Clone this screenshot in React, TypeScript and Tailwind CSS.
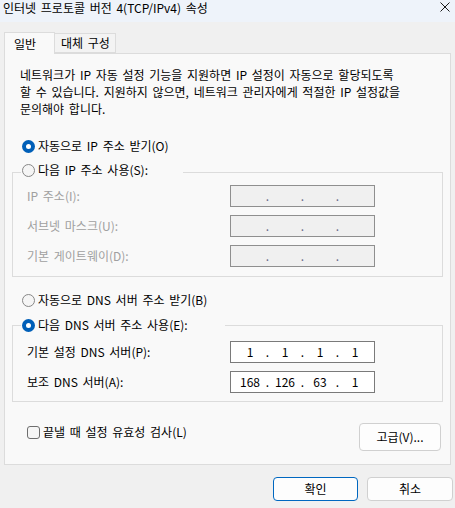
import React from 'react'

const Radio: React.FC<{ checked?: boolean }> = ({ checked }) =>
  checked ? (
    <span className="w-[13px] h-[13px] rounded-full bg-[#005fb8] flex items-center justify-center shrink-0">
      <span className="w-[5px] h-[5px] rounded-full bg-white" />
    </span>
  ) : (
    <span className="w-[13px] h-[13px] rounded-full border border-[#878787] bg-[#f5f5f5] shrink-0" />
  )

const RadioRow: React.FC<{ checked?: boolean; label: string }> = ({ checked, label }) => (
  <div className="flex items-center h-[18px] gap-[3px]">
    <Radio checked={checked} />
    <span>{label}</span>
  </div>
)

const IpBox: React.FC<{ values: string[]; disabled?: boolean }> = ({ values, disabled }) => (
  <div
    className={`w-[145px] h-[22px] border flex items-center justify-center [word-spacing:0] ${
      disabled ? 'bg-[#f0f0f0] border-[#8f8f8f] text-[#6a6a8a]' : 'bg-white border-[#7a7a7a] text-black'
    }`}
  >
    {values.map((v, i) => (
      <React.Fragment key={i}>
        {i > 0 && <span className="w-[7px] text-center">.</span>}
        <span className="w-[28px] text-center">{v}</span>
      </React.Fragment>
    ))}
  </div>
)

const Btn: React.FC<{ label: string; className?: string }> = ({ label, className }) => (
  <div className={`flex items-center justify-center rounded-[4px] border bg-[#fdfdfd] ${className}`}>
    {label}
  </div>
)

const App: React.FC = () => {
  const empty = ['', '', '', '']

  return (
    <div className="w-[455px] h-[508px] bg-[#f0f0f0] text-black text-[12px] leading-[18px] [word-spacing:2px] font-['Noto_Sans_CJK_KR','Noto_Sans',sans-serif] overflow-hidden">
      {/* Title bar */}
      <div className="h-[22px] bg-[#eef3fa] flex items-start justify-between pl-[3px] pr-[5px]">
        <span className="leading-[16px]">인터넷 프로토콜 버전 4(TCP/IPv4) 속성</span>
        <svg width="10" height="10" viewBox="0 0 10 10" className="mt-[2px]">
          <path d="M0.5 0.5 L9.5 9.5 M9.5 0.5 L0.5 9.5" stroke="#1a1a1a" strokeWidth="1" />
        </svg>
      </div>

      {/* Tabs */}
      <div className="pt-[10px] pl-[4px] flex items-end relative z-10 -mb-px">
        <div className="w-[51px] h-[22px] bg-[#f9f9f9] border border-b-0 border-[#dcdcdc] pl-[9px] flex items-center">
          일반
        </div>
        <div className="w-[61px] h-[20px] bg-[#f3f3f3] border border-l-0 border-[#dcdcdc] pl-[6px] flex items-center mb-px">
          대체 구성
        </div>
      </div>

      {/* Panel */}
      <div className="ml-[4px] w-[447px] bg-[#f9f9f9] border border-[#dcdcdc] pb-[13px]">
        <p className="pt-[12px] pl-[15px] leading-[17px] whitespace-nowrap">
          네트워크가 IP 자동 설정 기능을 지원하면 IP 설정이 자동으로 할당되도록
          <br />
          할 수 있습니다. 지원하지 않으면, 네트워크 관리자에게 적절한 IP 설정값을
          <br />
          문의해야 합니다.
        </p>

        <div className="mt-[20px] ml-[17px]">
          <RadioRow checked label="자동으로 IP 주소 받기(O)" />
        </div>

        <fieldset className="mt-[6px] mx-[7px] border border-[#dcdcdc] px-[8px] pb-[9px]">
          <legend className="w-[162px] pl-[1px] pb-[4px]">
            <RadioRow label="다음 IP 주소 사용(S):" />
          </legend>
          <div className="pt-[2px] pl-[6px] grid grid-cols-[203px_145px] gap-y-[8px] items-center text-[#a0a0a0]">
            <span>IP 주소(I):</span>
            <IpBox values={empty} disabled />
            <span>서브넷 마스크(U):</span>
            <IpBox values={empty} disabled />
            <span>기본 게이트웨이(D):</span>
            <IpBox values={empty} disabled />
          </div>
        </fieldset>

        <div className="mt-[14px] ml-[17px]">
          <RadioRow label="자동으로 DNS 서버 주소 받기(B)" />
        </div>

        <fieldset className="mt-[7px] mx-[7px] border border-[#dcdcdc] px-[8px] pb-[8px]">
          <legend className="w-[204px] pl-[1px]">
            <RadioRow checked label="다음 DNS 서버 주소 사용(E):" />
          </legend>
          <div className="pt-[7px] pl-[6px] grid grid-cols-[203px_145px] gap-y-[8px] items-center">
            <span>기본 설정 DNS 서버(P):</span>
            <IpBox values={['1', '1', '1', '1']} />
            <span>보조 DNS 서버(A):</span>
            <IpBox values={['168', '126', '63', '1']} />
          </div>
        </fieldset>

        <div className="mt-[21px] ml-[22px] mr-[9px] flex items-start justify-between">
          <label className="flex items-center h-[18px] gap-[3px]">
            <span className="w-[13px] h-[13px] rounded-[3px] border border-[#6e6e6e] bg-[#f6f6f6]" />
            <span>끝낼 때 설정 유효성 검사(L)</span>
          </label>
          <Btn label="고급(V)..." className="w-[82px] h-[28px] border-[#d0d0d0]" />
        </div>
      </div>

      {/* Footer buttons */}
      <div className="mt-[12px] pr-[2px] flex justify-end gap-[9px]">
        <Btn label="확인" className="w-[85px] h-[24px] border-[#0067c0]" />
        <Btn label="취소" className="w-[86px] h-[24px] border-[#d0d0d0]" />
      </div>
    </div>
  )
}

export default App
